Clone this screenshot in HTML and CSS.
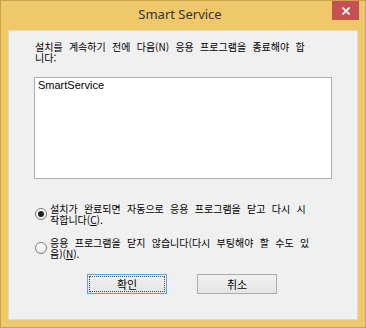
FILE: index.html
```html
<!DOCTYPE html>
<html lang="ko">

    <head>
        <meta charset="UTF-8">
        <title>Smart Service</title>
        <link rel="stylesheet" href="styles.css">
    </head>

    <body>
        <div class="window">
            <div class="titlebar">
                <span></span>
                <span class="title">Smart Service</span>
                <div class="close-box">
                    <button class="close-btn" title="닫기">
                        <svg width="8" height="8" viewBox="0 0 8 8">
                            <path d="M0.5 0.5 L7.5 7.5 M7.5 0.5 L0.5 7.5" stroke="#fff" stroke-width="1.7" fill="none" />
                        </svg>
                    </button>
                </div>
            </div>

            <div class="client">
                <p class="message">설치를 계속하기 전에 다음(N) 응용 프로그램을 종료해야 합<br>니다:</p>

                <div class="app-list">
                    <div class="app-item">SmartService</div>
                </div>

                <label class="radio-row first">
                    <span class="radio checked"></span>
                    <span class="radio-text">설치가 완료되면 자동으로 응용 프로그램을 닫고 다시 시<br>작합니다(<u>C</u>).</span>
                </label>

                <label class="radio-row second">
                    <span class="radio"></span>
                    <span class="radio-text">응용 프로그램을 닫지 않습니다(다시 부팅해야 할 수도 있<br>음)(<u>N</u>).</span>
                </label>

                <div class="buttons">
                    <button class="btn default"><span class="focus">확인</span></button>
                    <button class="btn">취소</button>
                </div>
            </div>
        </div>
    </body>

</html>
```

FILE: styles.css
```css
* {
    margin: 0;
    padding: 0;
    box-sizing: border-box;
}

body {
    font-family: "Noto Sans CJK KR", sans-serif;
    background: #efc86a;
}

.window {
    width: 366px;
    height: 328px;
    display: flex;
    flex-direction: column;
    background-color: #efc86a;
    border: 1px solid #caa24e;
}

/* title bar */
.titlebar {
    height: 29px;
    display: grid;
    grid-template-columns: 1fr auto 1fr;
    padding-right: 6px;
}

.title {
    padding-top: 4px;
    font-family: "Noto Sans", sans-serif;
    font-size: 13px;
    line-height: 18px;
    color: #333;
}

.close-box {
    display: flex;
    justify-content: flex-end;
    align-items: flex-start;
}

.close-btn {
    width: 27px;
    height: 19px;
    border: none;
    background-color: #c75050;
    display: flex;
    align-items: center;
    justify-content: center;
}

/* client area */
.client {
    flex-grow: 1;
    margin: 0 7px 7px 7px;
    background-color: #f0f0f0;
    border: 1px solid #dcd8cc;
    padding: 10px 25px 0 25px;
    display: flex;
    flex-direction: column;
    font-size: 10px;
    line-height: 11px;
    color: #000;
}

.message {
    padding-left: 1px;
    word-spacing: 3.5px;
    white-space: nowrap;
}

.app-list {
    margin-top: 14px;
    height: 102px;
    background-color: #fff;
    border: 1px solid #abadb3;
    padding: 1px 3px;
}

.app-item {
    font-family: "Liberation Sans", Arial, sans-serif;
    font-size: 11px;
    line-height: 13px;
}

.radio-row {
    display: flex;
    align-items: center;
    padding-left: 1px;
}

.radio-row.first {
    margin-top: 24px;
}

.radio-row.second {
    margin-top: 12px;
}

.radio {
    width: 12px;
    height: 12px;
    border: 1px solid #7a7a7a;
    border-radius: 50%;
    background: linear-gradient(#ffffff, #ececec);
    display: flex;
    align-items: center;
    justify-content: center;
    margin-right: 3px;
    flex-shrink: 0;
}

.radio.checked::after {
    content: "";
    width: 6px;
    height: 6px;
    border-radius: 50%;
    background-color: #222;
}

.radio-text {
    word-spacing: 3.5px;
    white-space: nowrap;
}

.radio-text u {
    text-underline-offset: 1px;
}

/* buttons */
.buttons {
    margin-top: 15px;
    display: flex;
    justify-content: center;
    gap: 30px;
    padding-right: 2px;
}

.btn {
    width: 80px;
    height: 20px;
    font-family: "Noto Sans CJK KR", sans-serif;
    font-size: 11px;
    line-height: 14px;
    color: #000;
    background: linear-gradient(#f0f0f0, #e5e5e5);
    border: 1px solid #acacac;
    display: flex;
    align-items: center;
    justify-content: center;
}

.btn.default {
    border-color: #5fa4e6;
    padding: 1px;
}

.btn .focus {
    width: 100%;
    height: 100%;
    border: 1px dotted #4a4a4a;
    display: flex;
    align-items: center;
    justify-content: center;
}
```
